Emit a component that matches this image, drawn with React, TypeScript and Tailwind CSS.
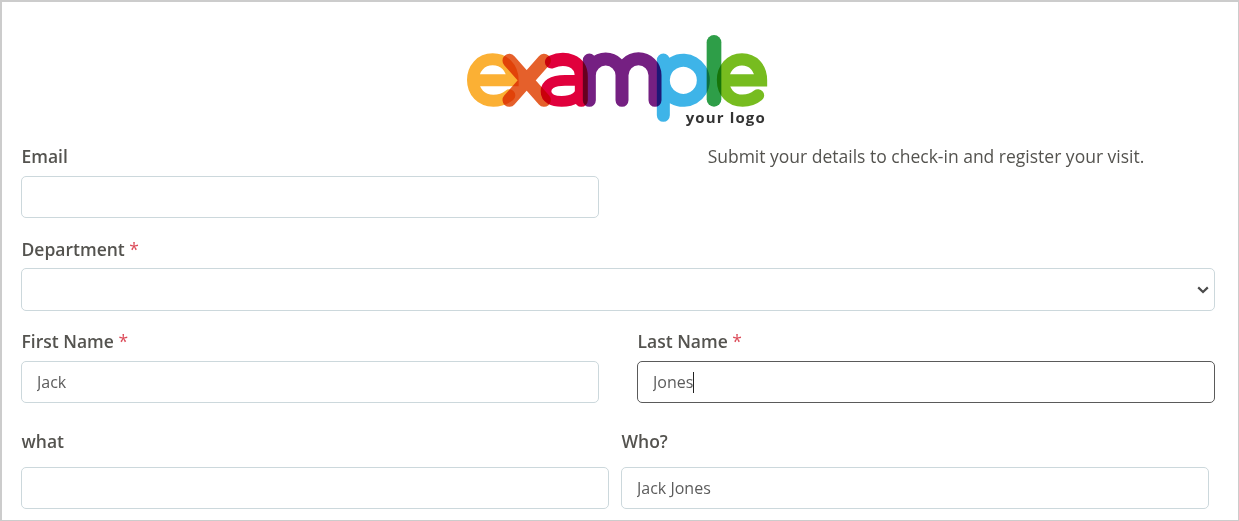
const labelClass = 'block pl-[0.5px] text-[17.5px] leading-[22px] font-semibold text-[#54534f]';
const inputClass =
  'block w-full h-[42px] px-[15px] bg-white border border-[#ccd8dc] rounded-[5px] text-[16px] text-[#5c5c5c] outline-none';

function Logo() {
  return (
    <svg width="340" height="115" viewBox="0 0 1020 345" fill="none" strokeLinecap="round" className="block mx-auto">
      <g strokeWidth="39">
        {/* e */}
        <path className="mix-blend-multiply" stroke="#fbb034" strokeWidth="36" d="M72 181 H188 C188 142 162 118 128 118 C92 118 69 146 69 180 C69 216 94 242 130 242 C150 242 166 236 178 226" />
        {/* x */}
        <path className="mix-blend-multiply" stroke="#e5602b" strokeWidth="41" d="M178 122 L282 240 M282 122 L178 240" />
        {/* a */}
        <g className="mix-blend-multiply" stroke="#e0003c">
          <path d="M304 126 C345 108 394 122 394 170 V241" />
          <path strokeWidth="32" d="M394 181 H345 C305 181 288 196 288 214 C288 236 308 244 335 244 C370 244 394 228 394 205" />
        </g>
        {/* m */}
        <path className="mix-blend-multiply" stroke="#752082" d="M418 241 V120 M418 166 A48 48 0 0 1 516 166 V241 M516 166 A48 48 0 0 1 615 166 V241" />
        {/* p */}
        <path className="mix-blend-multiply" stroke="#3eb4e8" d="M640 286 V120 M640 180 A60 60 0 1 1 640 182" />
        {/* l */}
        <path className="mix-blend-multiply" stroke="#2e9e48" strokeWidth="44" d="M792 67 V238" />
        {/* e */}
        <path className="mix-blend-multiply" stroke="#77bc1f" strokeWidth="37" d="M822 181 H933 C933 142 908 118 876 118 C842 118 819 146 819 180 C819 216 842 242 878 242 C898 242 912 236 924 226" />
      </g>
      <text x="707" y="310" fontSize="45" fontWeight="700" letterSpacing="3.4" fill="#333333">your logo</text>
    </svg>
  );
}

function Field({ label, required, value, focused }: { label: string; required?: boolean; value?: string; focused?: boolean }) {
  return (
    <div className="flex-1 min-w-0">
      <label className={labelClass}>
        {label}
        {required && <span className="text-[#dc4c5a] font-normal"> *</span>}
      </label>
      <div className="relative mt-[9px]">
        <input
          readOnly
          defaultValue={value}
          className={focused ? inputClass.replace('border-[#ccd8dc]', 'border-[#5a5a5a]') : inputClass}
        />
        {focused && <span className="absolute left-[56px] top-[11px] h-[21px] w-px bg-[#222]" />}
      </div>
    </div>
  );
}

export default function App() {
  return (
    <div className="h-[521px] w-[1239px] overflow-hidden bg-white border border-[#cccccc] border-t-2 border-l-2 font-['Open_Sans',sans-serif]">
      <div className="pt-[18px]">
        <Logo />
      </div>
      <div className="pl-[19px] pr-[23px]">
        {/* Email + intro */}
        <div className="flex gap-[38px] mt-[10px]">
          <Field label="Email" />
          <p className="flex-1 min-w-0 text-center text-[17.5px] leading-[22px] text-[#54534f]">
            Submit your details to check-in and register your visit.
          </p>
        </div>

        {/* Department */}
        <div className="mt-[20px]">
          <label className={labelClass}>
            Department<span className="text-[#dc4c5a] font-normal"> *</span>
          </label>
          <div className="relative mt-[8px] h-[43px] border border-[#ccd8dc] rounded-[5px] bg-white">
            <svg width="12" height="8" viewBox="0 0 12 8" fill="none" className="absolute right-[5px] top-[17px]">
              <path d="M1.2 1.4 L6 6 L10.8 1.4" stroke="#4a4a4a" strokeWidth="2.2" />
            </svg>
          </div>
        </div>

        {/* Names */}
        <div className="flex gap-[38px] mt-[19px]">
          <Field label="First Name" required value="Jack" />
          <Field label="Last Name" required value="Jones" focused />
        </div>

        {/* what / who */}
        <div className="flex gap-[12px] mt-[27px] pr-[6px]">
          <div className="flex-1 min-w-0">
            <label className={labelClass}>what</label>
            <input readOnly className={`${inputClass} mt-[15px]`} />
          </div>
          <div className="flex-1 min-w-0">
            <label className={labelClass}>Who?</label>
            <input readOnly defaultValue="Jack Jones" className={`${inputClass} mt-[15px]`} />
          </div>
        </div>
      </div>
    </div>
  );
}
